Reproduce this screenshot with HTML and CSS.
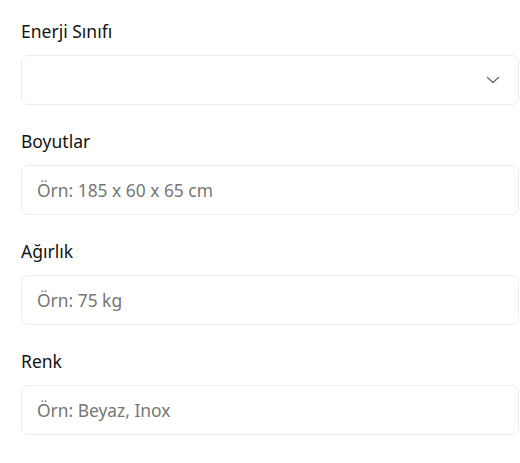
FILE: index.html
```html
<!DOCTYPE html>
<html lang="tr">
<head>
<meta charset="utf-8">
<link rel="stylesheet" href="styles.css">
</head>
<body>
<form class="form">
  <div class="field">
    <label class="label">Enerji Sınıfı</label>
    <div class="select">
      <svg class="chev" width="14" height="14" viewBox="0 0 14 14"><path d="M1.5 4.5l5.5 5 5.5-5" fill="none" stroke="#6b6b6b" stroke-width="1.4" stroke-linecap="round" stroke-linejoin="round"/></svg>
    </div>
  </div>
  <div class="field">
    <label class="label">Boyutlar</label>
    <input class="input" type="text" placeholder="Örn: 185 x 60 x 65 cm">
  </div>
  <div class="field">
    <label class="label">Ağırlık</label>
    <input class="input" type="text" placeholder="Örn: 75 kg">
  </div>
  <div class="field">
    <label class="label">Renk</label>
    <input class="input" type="text" placeholder="Örn: Beyaz, Inox">
  </div>
</form>
</body>
</html>
```
FILE: styles.css
```css
html, body {
  margin: 0;
  padding: 0;
  background: #fff;
}
body {
  font-family: "Noto Sans", "Open Sans", sans-serif;
  color: #1f1f1f;
  overflow: hidden;
}
.form {
  padding: 18px 0 0 21px;
  display: flex;
  flex-direction: column;
  gap: 23px;
}
.field {
  display: flex;
  flex-direction: column;
  gap: 11px;
}
.label {
  font-size: 17.5px;
  font-weight: 400;
  line-height: 26px;
  color: #141414;
}
.input, .select {
  box-sizing: border-box;
  width: 498px;
  height: 50px;
  border: 1px solid #ededed;
  border-radius: 7px;
  background: #fff;
  font-family: inherit;
  font-size: 17.4px;
  padding: 0 15px;
  color: #1f1f1f;
  outline: none;
  margin: 0;
}
.input::placeholder {
  color: #767676;
}
.select {
  display: flex;
  align-items: center;
  justify-content: flex-end;
  padding-right: 18px;
}
```
